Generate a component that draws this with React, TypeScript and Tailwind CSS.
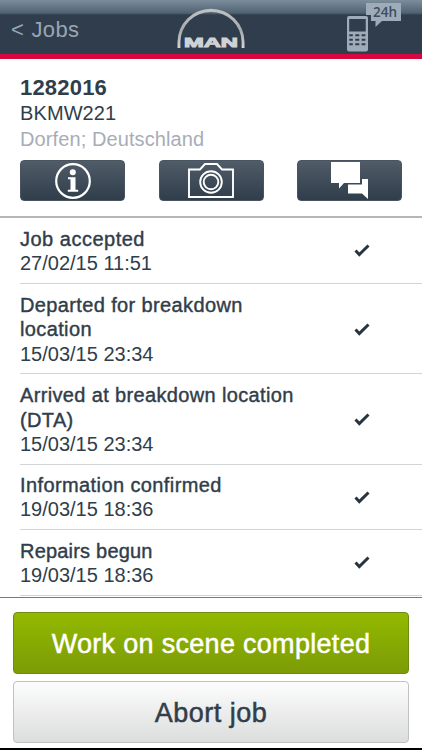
const actions = [
  { label: "Information", icon: <InfoIcon /> },
  { label: "Photos", icon: <CameraIcon /> },
  { label: "Messages", icon: <ChatIcon /> },
];

const steps = [
  { title: "Job accepted", date: "27/02/15 11:51", size: "h-[66px]", spacing: "leading-[24px] tracking-[0.5px]" },
  { title: "Departed for breakdown location", date: "15/03/15 23:34", size: "h-[90px] pt-[1px]", spacing: "leading-[24.5px] tracking-[0.37px]" },
  { title: "Arrived at breakdown location (DTA)", date: "15/03/15 23:34", size: "h-[91px] pt-[1px]", spacing: "leading-[24.5px] tracking-[0.35px]" },
  { title: "Information confirmed", date: "19/03/15 18:36", size: "h-[65px]", spacing: "leading-[24px] tracking-[0.4px]" },
  { title: "Repairs begun", date: "19/03/15 18:36", size: "h-[66px]", spacing: "leading-[24px] tracking-[0.2px]" },
];

function InfoIcon() {
  return (
    <svg width="38" height="38" viewBox="0 0 38 38" fill="none">
      <circle cx="19" cy="19" r="16.8" stroke="white" strokeWidth="2.2" />
      <circle cx="18.8" cy="10.3" r="3" fill="white" />
      <path d="M14 15.3h7.5v12.4h2.7v2H13.8v-2h2.7V17.3H14z" fill="white" />
    </svg>
  );
}

function CameraIcon() {
  return (
    <svg width="46" height="35" viewBox="0 0 46 35" fill="none" stroke="white" strokeWidth="1.9">
      <path d="M1 6.5h11L17 1h12l5 5.5h11V34H1z" />
      <circle cx="23" cy="19" r="10.8" />
      <circle cx="23" cy="19" r="7.3" />
    </svg>
  );
}

function ChatIcon() {
  return (
    <svg width="37" height="37" viewBox="0 0 37 37" fill="white">
      <path d="M0 0h29v21H13l-5 5.5V21H0z" />
      <path d="M31 17h6v20l-6-5.5H17v-9h14z" />
    </svg>
  );
}

function PhoneIcon() {
  return (
    <svg width="56" height="54" viewBox="0 0 56 54">
      <rect x="1" y="16" width="21" height="35.5" rx="2" fill="#9eabb9" />
      <rect x="3.2" y="19" width="16.5" height="12.5" fill="#303d4c" />
      <g fill="#303d4c">
        <path d="M3.3 34.3h3.5v2H3.3zM9.3 34.3h4v2h-4zM15.6 34.3h3.8v2h-3.8z" />
        <path d="M3.3 38.8h3.5v2H3.3zM9.3 38.8h4v2h-4zM15.6 38.8h3.8v2h-3.8z" />
        <path d="M3.3 43.3h3.5v2H3.3zM9.3 43.3h4v2h-4zM15.6 43.3h3.8v2h-3.8z" />
      </g>
      <path d="M20 3h35v18H36l-6.5 6v-6H25v-6h-5z" fill="#9eabb9" />
      <text x="27" y="17" fontFamily="Open Sans, sans-serif" fontSize="13.5" fontWeight="600" textLength="24" fill="#3f4d5d">
        24h
      </text>
    </svg>
  );
}

function Logo() {
  return (
    <svg width="68" height="40" viewBox="0 0 68 40" className="overflow-visible">
      <defs>
        <linearGradient id="metal" x1="0" y1="0" x2="0" y2="1">
          <stop offset="0" stopColor="#bfc3c5" />
          <stop offset="0.55" stopColor="#a6aaad" />
          <stop offset="1" stopColor="#d2d4d5" />
        </linearGradient>
      </defs>
      <path d="M0.5 39V33A33.5 33.2 0 0 1 67.5 33V39H64.6V33A30.6 30 0 0 0 3.4 33V39z" fill="url(#metal)" />
      <text
        x="7"
        y="38.3"
        textLength="54"
        lengthAdjust="spacingAndGlyphs"
        fontFamily="Liberation Sans, sans-serif"
        fontWeight="700"
        fontSize="13.5"
        fill="#d0d2d4"
        stroke="#d0d2d4"
        strokeWidth="1"
      >
        MAN
      </text>
    </svg>
  );
}

function Header() {
  return (
    <header className="grid h-[59px] shrink-0 grid-cols-3 border-b-[5px] border-[#d5093f] bg-[linear-gradient(to_bottom,#7c8d9b_0px,#506373_13px,#303d4c_15px,#303d4c_54px)]">
      <a className="pt-[17px] pl-[11px] text-[22px] leading-[25px] tracking-[0.3px] text-[#98a6b4]">
        <span className="mr-[1px]">&lt;</span> Jobs
      </a>
      <div className="flex justify-center pt-[9px]">
        <Logo />
      </div>
      <div className="flex justify-end pr-5">
        <PhoneIcon />
      </div>
    </header>
  );
}

export default function App() {
  return (
    <div className="flex h-[750px] w-[422px] flex-col overflow-hidden border-b-2 border-black bg-white font-['Liberation_Sans',Arial,sans-serif] text-[#303d4a]">
      <Header />

      <section className="h-[159px] shrink-0 border-b-2 border-[#b7b7b7] px-5 pt-4">
        <h1 className="text-[22px] leading-[25px] font-bold tracking-[0.2px]">1282016</h1>
        <p className="text-[20px] leading-[26px] tracking-[0.1px]">BKMW221</p>
        <p className="text-[20px] leading-[26px] tracking-[0.1px] text-[#a6adb7]">Dorfen; Deutschland</p>
        <div className="mt-2 flex justify-between">
          {actions.map(({ label, icon }) => (
            <button
              key={label}
              aria-label={label}
              className="flex h-[41px] w-[105px] items-center justify-center rounded-[4px] border border-[#485561] bg-linear-to-b from-[#505c68] to-[#303d4b]"
            >
              {icon}
            </button>
          ))}
        </div>
      </section>

      <ul className="flex shrink-0 flex-col pl-5">
        {steps.map(({ title, date, size, spacing }) => (
          <li key={title} className={`${size} flex items-center justify-between border-b border-[#d2d4d6] pr-[52px]`}>
            <div className="w-[285px] text-[20px]">
              <p className={`${spacing} [-webkit-text-stroke:0.4px_#303d4a]`}>{title}</p>
              <p className="leading-[24px]">{date}</p>
            </div>
            <svg width="16" height="13" viewBox="0 0 16 13" fill="none" stroke="#28343f" strokeWidth="3">
              <path d="M1.5 6.5L5.3 10.5L14.5 1.5" />
            </svg>
          </li>
        ))}
      </ul>

      <footer className="mt-[1px] flex flex-col gap-[7px] border-t border-[#77797b] px-[13px] pt-[14px] text-[27px]">
        <button className="h-[62px] rounded-[4px] border border-[#6d8a12] bg-linear-to-b from-[#93b900] to-[#7c9b06] pt-[3px] tracking-[0.3px] text-white [-webkit-text-stroke:0.5px_white]">
          Work on scene completed
        </button>
        <button className="h-[62px] rounded-[4px] border-[1.5px] border-[#bfc1c3] bg-linear-to-b from-[#fdfdfd] to-[#dcdddd] pt-[2px] tracking-[0.5px] [-webkit-text-stroke:0.5px_#303d4a]">
          Abort job
        </button>
      </footer>
    </div>
  );
}
